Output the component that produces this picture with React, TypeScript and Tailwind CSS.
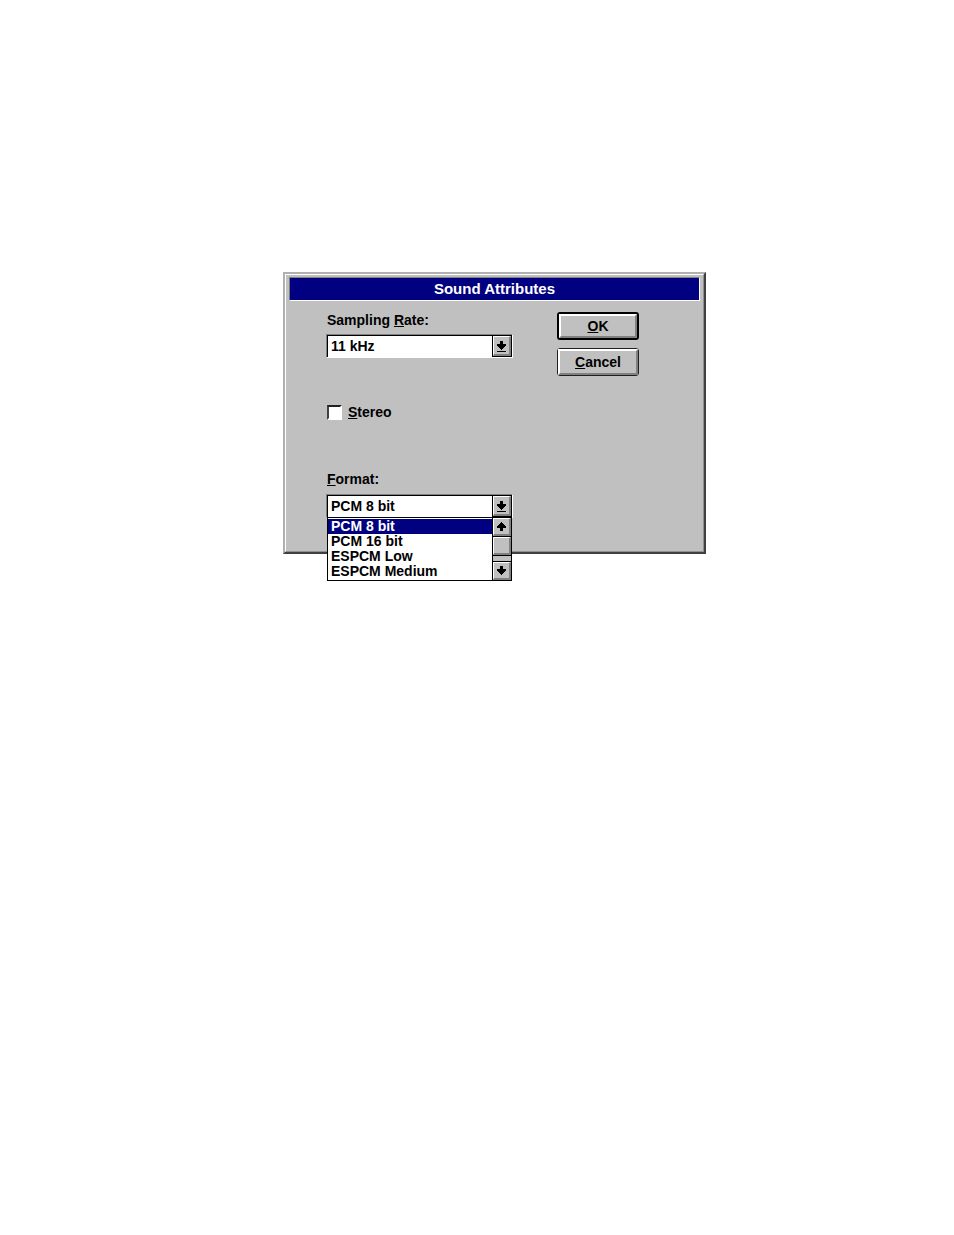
import { ReactNode, useState } from 'react';

const rates = ['11 kHz', '22 kHz', '44 kHz'];
const formats = ['PCM 8 bit', 'PCM 16 bit', 'ESPCM Low', 'ESPCM Medium'];

// gray raised face, the border widths are set by each control
const bevel =
    'flex items-center justify-center bg-[#c0c0c0] border-t-white border-l-white border-r-[#808080] border-b-[#808080]';
const thin = 'border-t border-l border-r-2 border-b-2';

function Arrow({ up = false }: { up?: boolean }) {
    return (
        <svg viewBox="0 0 9 9" className="w-[9px] h-[9px] shrink-0" shapeRendering="crispEdges" aria-hidden="true">
            <path
                transform={up ? 'rotate(180 4.5 4.5)' : undefined}
                d="M3 0h3v3h3v2h-1v1h-1v1h-1v1h-1v1h-1v-1h-1v-1h-1v-1h-1v-1h-1v-2h3z"
            />
        </svg>
    );
}

function DropArrow() {
    return (
        <svg viewBox="0 0 9 11" className="w-[9px] h-[11px] shrink-0" shapeRendering="crispEdges" aria-hidden="true">
            <path d="M3 0h3v3h3v2h-1v1h-1v1h-1v1h-1v1h-1v-1h-1v-1h-1v-1h-1v-1h-1v-2h3z" />
            <path d="M0 10h9v1h-9z" />
        </svg>
    );
}

type ComboProps = {
    id: string;
    options: string[];
    value: string;
    onChange: (value: string) => void;
    children?: ReactNode;
};

function Combo({ id, options, value, onChange, children }: ComboProps) {
    return (
        <div className="relative w-[187px] h-6 border border-t-[#808080] border-l-[#808080] border-r-white border-b-white">
            <div className="flex h-full border border-b-0 border-black bg-white">
                <select
                    id={id}
                    value={value}
                    onChange={(e) => onChange(e.target.value)}
                    className="appearance-none flex-1 min-w-0 pl-[3px] pb-px bg-white text-[14px] leading-5 outline-none"
                >
                    {options.map((option) => (
                        <option key={option}>{option}</option>
                    ))}
                </select>
                <div className="w-[19px] border-l border-b border-black flex">
                    <button aria-label="Open list" className={`${bevel} ${thin} flex-1 pt-px`}>
                        <DropArrow />
                    </button>
                </div>
            </div>
            {children}
        </div>
    );
}

function App() {
    const [rate, setRate] = useState(rates[0]);
    const [format, setFormat] = useState(formats[0]);

    return (
        <div className="min-h-screen bg-white pt-[272px] pl-[35px] flex justify-center items-start font-['Liberation_Sans',Arial,sans-serif] font-bold text-black">
            <div className="w-full max-w-[423px] border-2 border-t-[#b0b0b0] border-l-[#b0b0b0] border-r-[#404040] border-b-[#404040]">
                <div className="bg-[#c0c0c0] border border-t-white border-l-white border-r-[#909090] border-b-[#909090] px-[3px] pt-[2px] pb-[33px]">
                    {/* title bar */}
                    <div className="border border-t-[#808080] border-l-[#808080] border-r-white border-b-white">
                        <h1 className="bg-[#000080] text-white text-center text-[15px] leading-[22px]">
                            Sound Attributes
                        </h1>
                    </div>
                    <div className="flex justify-between pl-[37px] pr-[61px] pt-[11px]">
                        {/* options */}
                        <div className="flex flex-col items-start">
                            <label htmlFor="rate" className="text-[14px] leading-4 pl-px mb-[6px]">
                                Sampling <u>R</u>ate:
                            </label>
                            <Combo id="rate" options={rates} value={rate} onChange={setRate} />
                            <label className="flex items-center gap-[6px] mt-[46px] text-[14px] leading-4">
                                <input
                                    type="checkbox"
                                    className="appearance-none size-[15px] ml-px bg-white border-2 border-t-[#202020] border-l-[#404040] border-r-white border-b-white checked:bg-black"
                                />
                                <span>
                                    <u>S</u>tereo
                                </span>
                            </label>
                            <label htmlFor="format" className="text-[14px] leading-4 pl-px mt-[51px] mb-[7px]">
                                <u>F</u>ormat:
                            </label>
                            <Combo id="format" options={formats} value={format} onChange={setFormat}>
                                {/* open list */}
                                <div className="absolute left-0 right-0 top-[22px] flex bg-white border border-black">
                                    <ul role="listbox" aria-label="Format" className="flex-1 py-px text-[14px]">
                                        {formats.map((item) => (
                                            <li
                                                key={item}
                                                role="option"
                                                aria-selected={item === format}
                                                onClick={() => setFormat(item)}
                                                className="pl-[3px] h-[15px] leading-[15px] aria-selected:bg-[#000080] aria-selected:text-white"
                                            >
                                                {item}
                                            </li>
                                        ))}
                                    </ul>
                                    {/* scrollbar */}
                                    <div className="w-[19px] border-l border-black bg-[#c0c0c0] flex flex-col">
                                        <button aria-label="Scroll up" className={`${bevel} ${thin} h-[18px]`}>
                                            <Arrow up />
                                        </button>
                                        <div className="border-y border-black">
                                            <div className={`${bevel} ${thin} h-[18px]`}></div>
                                        </div>
                                        <div className="mt-auto border-t border-black">
                                            <button aria-label="Scroll down" className={`${bevel} ${thin} h-[18px] w-full`}>
                                                <Arrow />
                                            </button>
                                        </div>
                                    </div>
                                </div>
                            </Combo>
                        </div>
                        {/* buttons */}
                        <div className="flex flex-col gap-2 w-[82px]">
                            <button className="h-7 border-2 border-black rounded-[3px] text-[14px]">
                                <span className={`${bevel} border-2 h-full`}>
                                    <span>
                                        <u>O</u>K
                                    </span>
                                </span>
                            </button>
                            <button className="h-7 border border-[#202020] rounded-[3px] text-[14px]">
                                <span className={`${bevel} border-2 h-full`}>
                                    <span>
                                        <u>C</u>ancel
                                    </span>
                                </span>
                            </button>
                        </div>
                    </div>
                </div>
            </div>
        </div>
    );
}

export default App;
